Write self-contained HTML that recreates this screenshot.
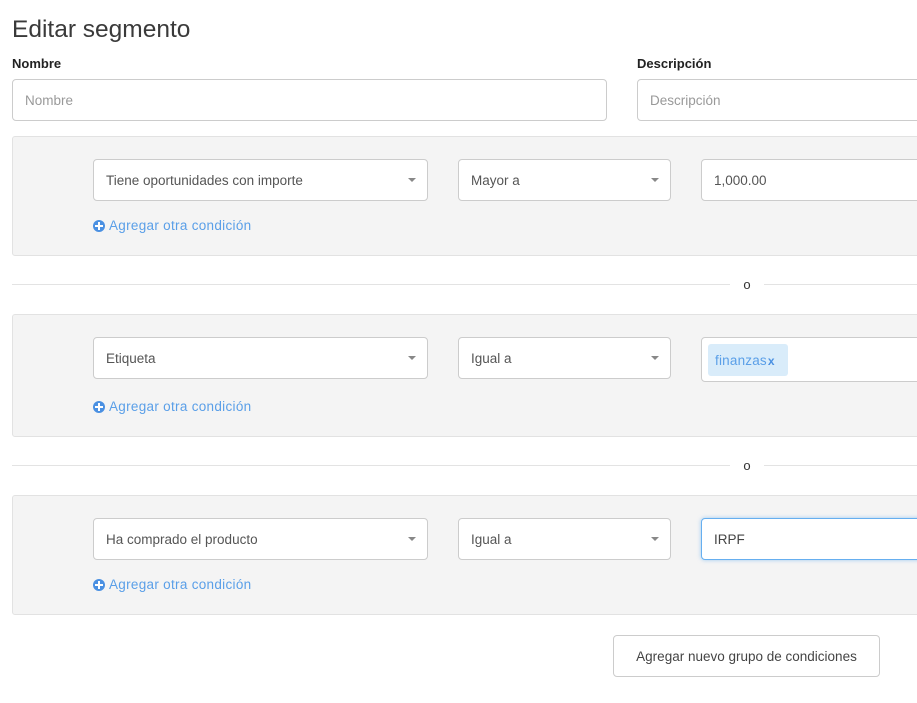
<!DOCTYPE html>
<html><head><meta charset="utf-8"><style>
*{box-sizing:border-box;margin:0;padding:0}
body{width:917px;height:703px;overflow:hidden;background:#fff;font-family:"Liberation Sans",sans-serif;color:#333;position:relative}
h1{position:absolute;left:12px;top:16px;font-size:24.5px;font-weight:normal;color:#3a3a3a}
.lbl{position:absolute;font-size:13px;font-weight:bold;color:#222}
.inp{position:absolute;background:#fff;border:1px solid #ccc;border-radius:4px;height:42px;font-size:13.5px;line-height:41px;padding-left:12px;color:#555}
.ph{color:#999}
.sel::after{content:"";position:absolute;right:11px;top:18px;border-left:4px solid transparent;border-right:4px solid transparent;border-top:4px solid #888}
.grp{position:absolute;left:12px;width:920px;background:#f4f4f4;border:1px solid #e2e2e2;border-radius:3px}
.add{position:absolute;left:93px;font-size:13.5px;color:#5a9fe8;display:flex;align-items:center;letter-spacing:.3px}
.add i{display:inline-block;width:12px;height:12px;border-radius:50%;background:#4a90e2;margin-right:4px;position:relative}
.add i::before{content:"";position:absolute;left:2px;top:5px;width:8px;height:2px;background:#fff}
.add i::after{content:"";position:absolute;left:5px;top:2px;width:2px;height:8px;background:#fff}
.hr{position:absolute;left:12px;width:905px;height:1px;background:#e3e3e3}
.o{position:absolute;left:730px;width:34px;background:#fff;text-align:center;font-size:13px;color:#333}
</style></head><body>
<h1>Editar segmento</h1>
<div class="lbl" style="left:12px;top:56px">Nombre</div>
<div class="lbl" style="left:637px;top:56px">Descripción</div>
<div class="inp ph" style="left:12px;top:79px;width:595px">Nombre</div>
<div class="inp ph" style="left:637px;top:79px;width:300px">Descripción</div>

<div class="grp" style="top:136px;height:120px"></div>
<div class="inp sel" style="left:93px;top:159px;width:335px">Tiene oportunidades con importe</div>
<div class="inp sel" style="left:458px;top:159px;width:213px">Mayor a</div>
<div class="inp" style="left:701px;top:159px;width:240px">1,000.00</div>
<div class="add" style="top:218px"><i></i>Agregar otra condición</div>

<div class="hr" style="top:284px"></div><div class="o" style="top:277px">o</div>

<div class="grp" style="top:314px;height:123px"></div>
<div class="inp sel" style="left:93px;top:337px;width:335px">Etiqueta</div>
<div class="inp sel" style="left:458px;top:337px;width:213px">Igual a</div>
<div class="inp" style="left:701px;top:337px;width:240px;height:45px;padding-left:6px"><span style="display:inline-block;margin-top:6px;background:#d9ecfa;color:#5a9fe8;border-radius:3px;height:32px;line-height:33px;padding:0 13px 0 7px;vertical-align:top;letter-spacing:.2px">finanzas <b style="color:#4a90e2;font-size:12px;margin-left:-3px">x</b></span></div>
<div class="add" style="top:399px"><i></i>Agregar otra condición</div>

<div class="hr" style="top:465px"></div><div class="o" style="top:458px">o</div>

<div class="grp" style="top:495px;height:120px"></div>
<div class="inp sel" style="left:93px;top:518px;width:335px">Ha comprado el producto</div>
<div class="inp sel" style="left:458px;top:518px;width:213px">Igual a</div>
<div class="inp" style="left:701px;top:518px;width:240px;border-color:#66aff0;box-shadow:0 0 4px rgba(102,175,240,.6);color:#444">IRPF</div>
<div class="add" style="top:577px"><i></i>Agregar otra condición</div>

<div class="inp" style="left:613px;top:635px;width:267px;text-align:center;padding:0;color:#444">Agregar nuevo grupo de condiciones</div>
</body></html>
